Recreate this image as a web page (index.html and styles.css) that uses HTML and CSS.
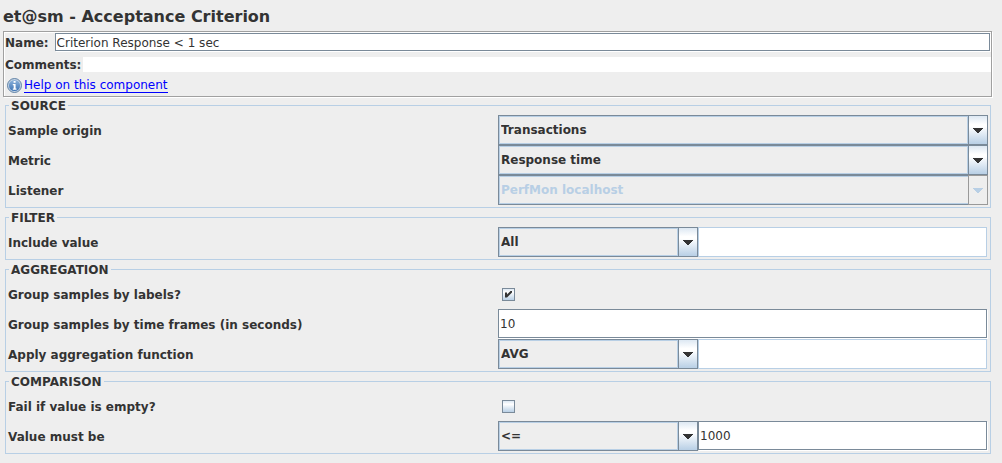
FILE: index.html
```html
<!DOCTYPE html>
<html lang="en">
<head>
<meta charset="utf-8">
<title>et@sm - Acceptance Criterion</title>
<link rel="stylesheet" href="styles.css">
</head>
<body>
<h1 class="title">et@sm - Acceptance Criterion</h1>
<form class="panel">
  <section class="header">
    <div class="header-row name-row">
      <label for="name">Name:</label>
      <input class="field name-field" id="name" type="text" value="Criterion Response &lt; 1 sec">
    </div>
    <div class="header-row comments-row">
      <label for="comments">Comments:</label>
      <input class="comments-field" id="comments" type="text">
    </div>
    <div class="help-row">
      <svg class="help-icon" viewBox="0 0 15 15" aria-hidden="true">
        <defs>
          <linearGradient id="ball" x1="0" y1="0" x2="0" y2="1">
            <stop offset="0" stop-color="#8fb4dc"/>
            <stop offset="1" stop-color="#3c73b4"/>
          </linearGradient>
        </defs>
        <circle cx="7.5" cy="7.5" r="7" fill="#c3d3e4" stroke="#55799f" stroke-width="0.9"/>
        <circle cx="7.5" cy="7.5" r="5.6" fill="url(#ball)"/>
        <path d="M6.6 3h2v1.8h-2zM5.8 6h2.8v4.6h.9v1.2H5.8v-1.2h.9V7.2h-.9z" fill="#fff"/>
      </svg>
      <a class="help-link" href="#help">Help on this component</a>
    </div>
  </section>

  <fieldset class="group">
    <legend>SOURCE</legend>
    <div class="row">
      <label for="origin">Sample origin</label>
      <div class="combo">
        <select id="origin"><option>Transactions</option></select>
        <span class="arrow"><svg viewBox="0 0 10 5"><path d="M0 0h10v1H9v1H8v1H7v1H6v1H4V4H3V3H2V2H1V1H0z"/></svg></span>
      </div>
    </div>
    <div class="row">
      <label for="metric">Metric</label>
      <div class="combo">
        <select id="metric"><option>Response time</option></select>
        <span class="arrow"><svg viewBox="0 0 10 5"><path d="M0 0h10v1H9v1H8v1H7v1H6v1H4V4H3V3H2V2H1V1H0z"/></svg></span>
      </div>
    </div>
    <div class="row">
      <label for="listener">Listener</label>
      <div class="combo combo-disabled">
        <select id="listener" disabled><option>PerfMon localhost</option></select>
        <span class="arrow"><svg viewBox="0 0 10 5"><path d="M0 0h10v1H9v1H8v1H7v1H6v1H4V4H3V3H2V2H1V1H0z"/></svg></span>
      </div>
    </div>
  </fieldset>

  <fieldset class="group">
    <legend>FILTER</legend>
    <div class="row">
      <label for="include">Include value</label>
      <div class="pair">
        <div class="combo">
          <select id="include"><option>All</option></select>
          <span class="arrow"><svg viewBox="0 0 10 5"><path d="M0 0h10v1H9v1H8v1H7v1H6v1H4V4H3V3H2V2H1V1H0z"/></svg></span>
        </div>
        <input class="field" type="text" aria-label="Filter value" disabled>
      </div>
    </div>
  </fieldset>

  <fieldset class="group">
    <legend>AGGREGATION</legend>
    <div class="row">
      <label for="by-labels">Group samples by labels?</label>
      <input class="check" id="by-labels" type="checkbox" checked>
    </div>
    <div class="row">
      <label for="frames">Group samples by time frames (in seconds)</label>
      <input class="field" id="frames" type="text" value="10">
    </div>
    <div class="row">
      <label for="function">Apply aggregation function</label>
      <div class="pair">
        <div class="combo">
          <select id="function"><option>AVG</option></select>
          <span class="arrow"><svg viewBox="0 0 10 5"><path d="M0 0h10v1H9v1H8v1H7v1H6v1H4V4H3V3H2V2H1V1H0z"/></svg></span>
        </div>
        <input class="field" type="text" aria-label="Function parameter" disabled>
      </div>
    </div>
  </fieldset>

  <fieldset class="group">
    <legend>COMPARISON</legend>
    <div class="row">
      <label for="fail-empty">Fail if value is empty?</label>
      <input class="check" id="fail-empty" type="checkbox">
    </div>
    <div class="row">
      <label for="operator">Value must be</label>
      <div class="pair">
        <div class="combo">
          <select id="operator"><option>&lt;=</option></select>
          <span class="arrow"><svg viewBox="0 0 10 5"><path d="M0 0h10v1H9v1H8v1H7v1H6v1H4V4H3V3H2V2H1V1H0z"/></svg></span>
        </div>
        <input class="field" type="text" aria-label="Comparison value" value="1000">
      </div>
    </div>
  </fieldset>
</form>
</body>
</html>
```
FILE: styles.css
```css
:root {
  --face: #eeeeee;
  --line: #7a8a99;
  --soft: #b8cfe5;
  --ink: #333333;
}

* {
  box-sizing: border-box;
}

body {
  margin: 0;
  padding: 0 10px 8px 3px;
  background: var(--face);
  color: var(--ink);
  font: bold 12px/14px "DejaVu Sans", sans-serif;
}

.title {
  margin: 0;
  padding: 7px 0 4px;
  font-size: 16px;
  line-height: 20px;
}

input,
select {
  margin: 0;
  border-radius: 0;
  color: var(--ink);
  font: inherit;
}

.header {
  border: 1px solid #a0a0a0;
  box-shadow: 1px 1px 0 #fff, inset 1px 1px 0 #fff;
  padding: 1px 0 2px 1px;
}

.header-row {
  display: flex;
  align-items: center;
}

.name-row {
  gap: 6px;
  height: 19px;
}

.comments-row {
  gap: 2px;
  height: 25px;
}

.comments-field {
  flex: 1;
  height: 15px;
  border: 0;
  padding: 0;
  background: #fff;
  font-weight: normal;
}

.help-row {
  display: flex;
  align-items: center;
  gap: 2px;
  height: 17px;
  padding-left: 2px;
}

.help-icon {
  width: 15px;
  height: 15px;
}

.help-link {
  border-bottom: 1px solid #00f;
  color: #00f;
  font-weight: normal;
  line-height: 14px;
  text-decoration: none;
}

.field {
  flex: 1;
  min-width: 0;
  height: 29px;
  margin: 0 1px 1px 0;
  border: 1px solid var(--line);
  box-shadow: 1px 1px 0 #fff;
  padding: 0 1px;
  background: #fff;
  font-weight: normal;
}

.field:disabled {
  height: 30px;
  margin-bottom: 0;
  border-color: var(--soft);
  box-shadow: none;
}

.name-field {
  height: 18px;
  padding-top: 2px;
}

.group {
  min-width: 0;
  margin: 0 1px 1px 2px;
  border: 1px solid var(--soft);
  padding: 1px 2px 2px;
}

.group legend {
  height: 17px;
  margin: 0 0 0 1px;
  padding: 0 2px;
  line-height: 19px;
}

.row {
  display: grid;
  grid-template-columns: 1fr 1fr;
  align-items: center;
  height: 30px;
}

.row label {
  padding-top: 2px;
}

.pair {
  display: flex;
}

.pair .combo {
  width: 200px;
}

.combo {
  display: grid;
  grid-template-columns: 1fr 20px;
}

.combo select {
  grid-area: 1 / 1 / 2 / 3;
  appearance: none;
  height: 30px;
  border: 1px solid var(--line);
  box-shadow: inset 0 0 0 1px var(--soft);
  padding: 0 22px 0 2px;
  background: var(--face);
}

.combo select:disabled {
  color: var(--soft);
  opacity: 1;
}

.arrow {
  grid-area: 1 / 2 / 2 / 3;
  display: grid;
  place-items: center;
  z-index: 1;
  margin: 1px 1px 1px 0;
  border-left: 1px solid var(--line);
  box-shadow: -1px 0 0 var(--soft);
  background: linear-gradient(#dde8f3, #fff 30%, #fff 38%, #b8cfe5);
  pointer-events: none;
}

.arrow svg {
  width: 10px;
  height: 5px;
  fill: var(--ink);
  shape-rendering: crispEdges;
}

.combo-disabled .arrow {
  margin: 0;
  border: 1px solid #999;
  box-shadow: none;
  background: var(--face);
}

.combo-disabled .arrow svg {
  fill: var(--soft);
}

.check {
  appearance: none;
  display: grid;
  place-items: center;
  width: 13px;
  height: 13px;
  margin-left: 4px;
  border: 1px solid var(--line);
  background: linear-gradient(#dde8f3, #fff 30%, #b8cfe5);
}

.check:checked::before {
  content: "";
  width: 7px;
  height: 7px;
  background: var(--ink);
  clip-path: polygon(0 29%, 29% 29%, 29% 58%, 86% 0, 100% 0, 100% 29%, 29% 100%, 0 100%);
}
```
